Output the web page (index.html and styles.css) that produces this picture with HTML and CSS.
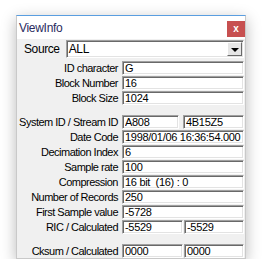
FILE: index.html
```html
<!doctype html>
<html lang="en">
<head>
    <meta charset="UTF-8">
    <title>ViewInfo</title>
    <link rel="stylesheet" href="styles.css">
</head>
<body>
<div class="window">
    <div class="titlebar">
        <span class="title">ViewInfo</span>
        <span class="close">x</span>
    </div>

    <div class="content">
        <div class="source-row">
            <span class="source-label">Source</span>
            <div class="select">
                <span class="select-text">ALL</span>
                <span class="drop"><i class="arrow"></i></span>
            </div>
        </div>

        <div class="fields">
            <label>ID character</label>
            <input class="box" readonly value="G">
            <label>Block Number</label>
            <input class="box" readonly value="16">
            <label>Block Size</label>
            <input class="box" readonly value="1024">

            <div class="spacer"></div>

            <label>System ID / Stream ID</label>
            <div class="pair pair-a">
                <input class="box" readonly value="A808">
                <input class="box" readonly value="4B15Z5">
            </div>
            <label>Date Code</label>
            <input class="box" readonly value="1998/01/06 16:36:54.000">
            <label>Decimation Index</label>
            <input class="box" readonly value="6">
            <label>Sample rate</label>
            <input class="box" readonly value="100">
            <label>Compression</label>
            <input class="box" readonly value="16 bit  (16) : 0">
            <label>Number of Records</label>
            <input class="box" readonly value="250">
            <label>First Sample value</label>
            <input class="box" readonly value="-5728">
            <label>RIC / Calculated</label>
            <div class="pair pair-b">
                <input class="box" readonly value="-5529">
                <input class="box" readonly value="-5529">
            </div>

            <div class="spacer"></div>

            <label>Cksum / Calculated</label>
            <div class="pair pair-b">
                <input class="box" readonly value="0000">
                <input class="box" readonly value="0000">
            </div>
        </div>
    </div>
</div>
</body>
</html>
```

FILE: styles.css
```css
body{
    margin: 0;
    background: #ffffff;
    font-family: "Liberation Sans", Arial, sans-serif;
    font-size: 11px;
    color: #000000;
}

.window{
    margin: 15px 0 0 16px;
    width: 230px;
    box-sizing: border-box;
    border: 1px solid #c9c9c9;
    border-top-color: #5a9ee0;
    background: #f0f0f0;
    box-shadow: 0 4px 14px rgba(0, 0, 0, 0.28);
}

.titlebar{
    height: 23px;
    background: #ffffff;
    display: flex;
    align-items: center;
    justify-content: space-between;
    padding-left: 2px;
    padding-right: 0;
}
.title{
    font-size: 12px;
    letter-spacing: -0.3px;
    color: #2a2a60;
}
.close{
    width: 18px;
    height: 16px;
    margin-top: 2px;
    background: #c75050;
    color: #ffffff;
    font-size: 10px;
    font-weight: bold;
    line-height: 15px;
    text-align: center;
}

.content{
    padding: 1px 1px 0 0;
}

.source-row{
    display: flex;
    align-items: center;
    margin-bottom: 3px;
}
.source-label{
    margin-left: 7px;
    margin-right: 6px;
    font-size: 12px;
    letter-spacing: -0.4px;
}
.select{
    flex: 1;
    height: 18px;
    box-sizing: border-box;
    background: #ffffff;
    border: 1px solid;
    border-color: #a0a0a0 #ffffff #ffffff #a0a0a0;
    box-shadow: inset 1px 1px 0 #696969, inset -1px -1px 0 #e3e3e3;
    display: flex;
    align-items: center;
    justify-content: space-between;
    padding: 1px 1px 1px 2px;
}
.select-text{
    font-size: 12px;
    letter-spacing: -0.3px;
}
.drop{
    width: 15px;
    height: 14px;
    box-sizing: border-box;
    background: #e6e6e6;
    border: 1px solid;
    border-color: #ffffff #696969 #696969 #ffffff;
    display: flex;
    align-items: center;
    justify-content: center;
}
.arrow{
    width: 0;
    height: 0;
    border-left: 4px solid transparent;
    border-right: 4px solid transparent;
    border-top: 4px solid #000000;
    margin-top: 1px;
}

.fields{
    display: grid;
    grid-template-columns: 101px 122px;
    column-gap: 4px;
    row-gap: 1px;
    padding-left: 0;
}
.fields label{
    height: 14px;
    line-height: 14px;
    text-align: right;
    letter-spacing: -0.5px;
    white-space: nowrap;
}
.spacer{
    grid-column: 1 / -1;
    height: 8px;
}

.box{
    display: block;
    width: 100%;
    height: 14px;
    box-sizing: border-box;
    margin: 0;
    padding: 0 2px 0 2px;
    border: 1px solid;
    border-color: #a0a0a0 #ffffff #ffffff #a0a0a0;
    box-shadow: inset 1px 1px 0 #696969, inset -1px -1px 0 #e3e3e3;
    background: #ffffff;
    font-family: "Liberation Sans", Arial, sans-serif;
    font-size: 11px;
    letter-spacing: -0.3px;
    line-height: 12px;
    color: #000000;
    outline: none;
}

.pair{
    display: grid;
}
.pair-a{
    grid-template-columns: 57px 1fr;
    column-gap: 4px;
}
.pair-b{
    grid-template-columns: 61px 1fr;
    column-gap: 1px;
}
```
